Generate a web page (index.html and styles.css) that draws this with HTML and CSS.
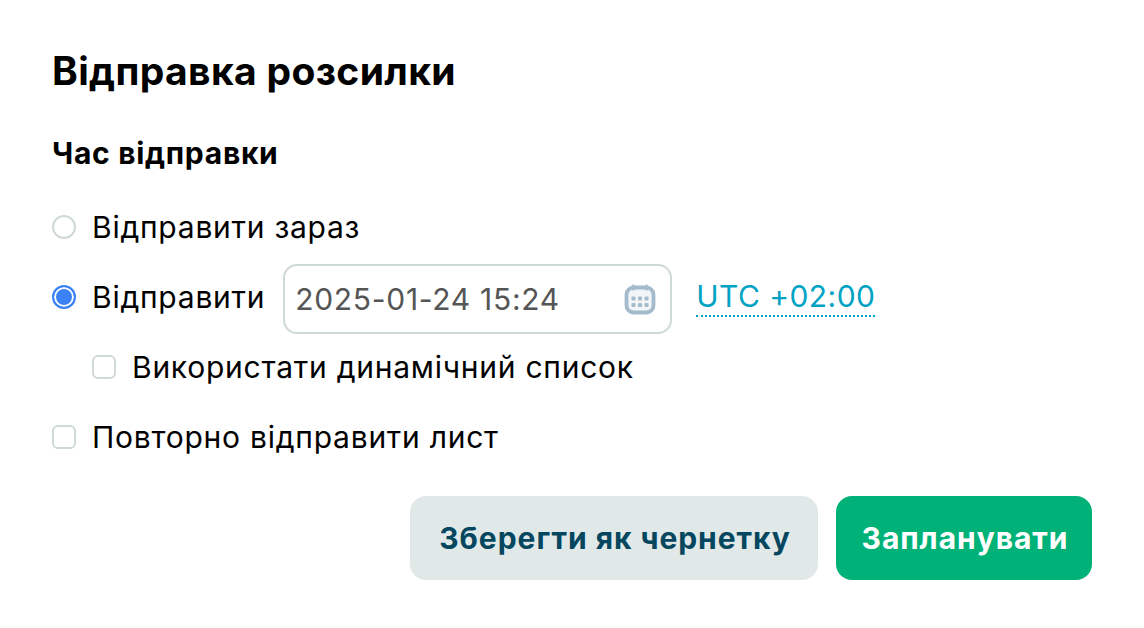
FILE: index.html
```html
<!DOCTYPE html>
<html lang="uk">
<head>
    <meta charset="UTF-8">
    <title>Відправка розсилки</title>
    <link rel="stylesheet" href="styles.css">
</head>
<body>
    <div class="modal">
        <h1 class="title">Відправка розсилки</h1>
        <h2 class="subtitle">Час відправки</h2>
        <div class="option-row">
            <span class="radio"></span>
            <span class="option-label">Відправити зараз</span>
        </div>
        <div class="option-row">
            <span class="radio radio-checked"></span>
            <span class="option-label">Відправити</span>
            <div class="date-input">
                <span class="date-value">2025-01-24 15:24</span>
                <svg class="calendar-icon" viewBox="0 0 32 32" width="32" height="32">
                    <rect x="2.5" y="3.5" width="27" height="25" rx="7" fill="#f1f5f8" stroke="#a3bbcb" stroke-width="3.8"/>
                    <path d="M9.5 2v3M22.5 2v3" stroke="#a3bbcb" stroke-width="3.2" stroke-linecap="round"/>
                    <g fill="#a3bbcb">
                        <rect x="7.5" y="12.5" width="4" height="4" rx="1"/>
                        <rect x="14" y="12.5" width="4" height="4" rx="1"/>
                        <rect x="20.5" y="12.5" width="4" height="4" rx="1"/>
                        <rect x="7.5" y="19" width="4" height="4" rx="1"/>
                        <rect x="14" y="19" width="4" height="4" rx="1"/>
                        <rect x="20.5" y="19" width="4" height="4" rx="1"/>
                    </g>
                </svg>
            </div>
            <a class="timezone">UTC +02:00</a>
        </div>
        <div class="option-row nested-row">
            <span class="checkbox"></span>
            <span class="option-label">Використати динамічний список</span>
        </div>
        <div class="option-row">
            <span class="checkbox"></span>
            <span class="option-label">Повторно відправити лист</span>
        </div>
        <div class="actions">
            <button class="btn btn-draft">Зберегти як чернетку</button>
            <button class="btn btn-primary">Запланувати</button>
        </div>
    </div>
</body>
</html>
```

FILE: styles.css
```css
* {
    margin: 0;
    padding: 0;
    box-sizing: border-box;
}

body {
    background: #fff;
    color: #000;
    font-family: "Inter", "Noto Sans", sans-serif;
    overflow: hidden;
}

.modal {
    width: 1144px;
    height: 628px;
    padding: 48px 52px 0;
}

.title {
    font-size: 39px;
    line-height: 46px;
    font-weight: 700;
    letter-spacing: 0.35px;
    margin-bottom: 41px;
}

.subtitle {
    font-size: 30px;
    line-height: 36px;
    font-weight: 700;
    letter-spacing: 0.7px;
    margin-bottom: 21px;
}

.option-row {
    display: flex;
    align-items: center;
    height: 70px;
}

.nested-row {
    padding-left: 40px;
}

.option-label {
    font-size: 30px;
    line-height: 44px;
    letter-spacing: 0.75px;
    margin-left: 16px;
}

.radio {
    width: 24px;
    height: 24px;
    border-radius: 50%;
    border: 2px solid #cfd9d9;
    flex-shrink: 0;
}

.radio-checked {
    background: #3b82f6;
    border: 2px solid #3b82f6;
    box-shadow: inset 0 0 0 2px #fff;
}

.checkbox {
    width: 24px;
    height: 24px;
    border-radius: 6px;
    border: 2px solid #cfd9d9;
    flex-shrink: 0;
}

.date-input {
    display: flex;
    align-items: center;
    justify-content: space-between;
    width: 389px;
    height: 70px;
    margin: 3px 0 0 18px;
    padding: 0 14px 0 10px;
    border: 2px solid #cfd9d9;
    border-radius: 14px;
}

.calendar-icon {
    margin-top: 2px;
}

.date-value {
    font-size: 30px;
    letter-spacing: 0.7px;
    color: #555;
}

.timezone {
    margin-left: 24px;
    font-size: 30px;
    line-height: 38px;
    letter-spacing: 0.45px;
    color: #00a3c4;
    border-bottom: 2px dotted #00a3c4;
}

.actions {
    display: flex;
    justify-content: flex-end;
    gap: 18px;
    margin-top: 24px;
}

.btn {
    height: 84px;
    border: none;
    border-radius: 16px;
    padding-left: 2px;
    font-family: "Inter", "Noto Sans", sans-serif;
    font-size: 30px;
    font-weight: 700;
    letter-spacing: 0.95px;
}

.btn-draft {
    width: 408px;
    background: #e1e9e8;
    color: #05475f;
}

.btn-primary {
    width: 256px;
    background: #00b277;
    color: #fff;
}
```
